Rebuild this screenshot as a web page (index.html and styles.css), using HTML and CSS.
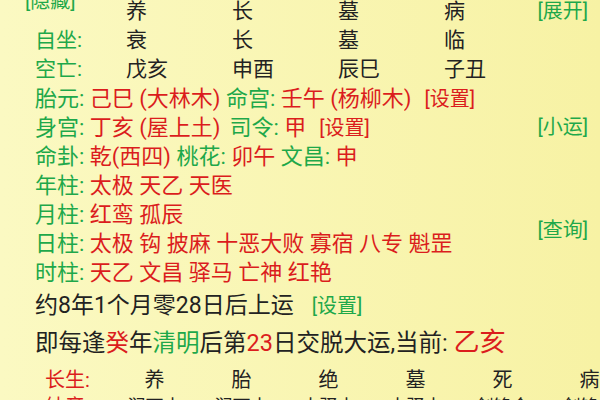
FILE: index.html
```html
<!DOCTYPE html>
<html lang="zh">
<head>
<meta charset="utf-8">
<link rel="stylesheet" href="styles.css">
</head>
<body>
<div class="page">
  <div class="grid5">
    <span class="g btn hide-btn">[隐藏]</span><span>养</span><span>长</span><span>墓</span><span>病</span><span class="g btn">[展开]</span>
  </div>
  <div class="grid5">
    <span class="g">自坐:</span><span>衰</span><span>长</span><span>墓</span><span>临</span><span></span>
  </div>
  <div class="grid5">
    <span class="g">空亡:</span><span>戊亥</span><span>申酉</span><span>辰巳</span><span>子丑</span><span></span>
  </div>

  <div class="row">
    <div class="line"><span class="g">胎元:</span> <span class="r">己巳 (大林木)</span> <span class="g">命宫:</span> <span class="r">壬午 (杨柳木)</span><span class="r btn gap">[设置]</span></div>
  </div>
  <div class="row">
    <div class="line"><span class="g">身宫:</span> <span class="r">丁亥 (屋上土)</span><span class="g gap2">司令:</span> <span class="r">甲</span><span class="r btn gap">[设置]</span></div>
    <span class="g btn">[小运]</span>
  </div>
  <div class="row">
    <div class="line"><span class="g">命卦:</span> <span class="r">乾(西四)</span> <span class="g">桃花:</span> <span class="r">卯午</span> <span class="g">文昌:</span> <span class="r">申</span></div>
  </div>
  <div class="row">
    <div class="line"><span class="g">年柱:</span> <span class="r">太极 天乙 天医</span></div>
  </div>
  <div class="row">
    <div class="line"><span class="g">月柱:</span> <span class="r">红鸾 孤辰</span></div>
  </div>
  <div class="row">
    <div class="line"><span class="g">日柱:</span> <span class="r">太极 钩 披麻 十恶大败 寡宿 八专 魁罡</span></div>
    <span class="g btn up">[查询]</span>
  </div>
  <div class="row">
    <div class="line"><span class="g">时柱:</span> <span class="r">天乙 文昌 驿马 亡神 红艳</span></div>
  </div>

  <div class="row tall">
    <div class="line k">约8年1个月零28日后上运<span class="g btn gap3">[设置]</span></div>
  </div>
  <div class="row tall wide">
    <div class="line k">即每逢<span class="r">癸</span>年<span class="g">清明</span>后第<span class="r">23</span>日交脱大运,当前: <span class="r big">乙亥</span></div>
  </div>

  <div class="table">
    <div class="trow first">
      <span class="r lab">长生:</span><span>养</span><span>胎</span><span>绝</span><span>墓</span><span>死</span><span>病</span>
    </div>
    <div class="trow second">
      <span class="r lab">纳音:</span><span>涧下水</span><span>涧下水</span><span>大驿土</span><span>大驿土</span><span>剑锋金</span><span>剑锋金</span>
    </div>
  </div>
</div>
</body>
</html>
```

FILE: styles.css
```css
html, body {
  margin: 0;
  padding: 0;
  width: 600px;
  height: 400px;
  overflow: hidden;
}
body {
  background: linear-gradient(to right, #fbf9c2, #f7f2a4);
  font-family: Roboto, "Noto Sans CJK SC", sans-serif;
  font-size: 21px;
  color: #222;
}
.page {
  margin-top: -3px;
  padding-left: 35px;
  padding-right: 12px;
}
.g { color: #1ea84a; }
.r { color: #db1d1d; }
.k { color: #222; }
.btn { font-size: 20px; }
.grid5 {
  display: grid;
  grid-template-columns: 91px 106px 106px 106px 1fr auto;
  height: 29px;
  line-height: 29px;
  white-space: nowrap;
}
.hide-btn {
  margin-top: -10px;
  margin-left: -10px;
}
.row {
  display: flex;
  align-items: flex-start;
  justify-content: space-between;
  height: 29px;
  line-height: 29px;
  font-size: 22px;
  white-space: nowrap;
}
.row.tall {
  height: 37px;
  line-height: 37px;
  font-size: 23px;
}
.row.wide { font-size: 23.5px; }
.gap { margin-left: 13px; }
.gap2 { margin-left: 9px; }
.gap3 { margin-left: 18px; }
.up { margin-top: -13px; }
.big { font-size: 26px; }
.table {
  margin-left: 10px;
  margin-top: 4px;
}
.trow {
  display: grid;
  grid-template-columns: 66px repeat(6, 87px);
  font-size: 20px;
  white-space: nowrap;
}
.trow span { text-align: center; }
.trow .lab { text-align: left; }
.trow.first { height: 30px; line-height: 30px; }
.trow.second { height: 24px; line-height: 24px; font-size: 18px; }
.trow.second .lab { font-size: 20px; }
```
